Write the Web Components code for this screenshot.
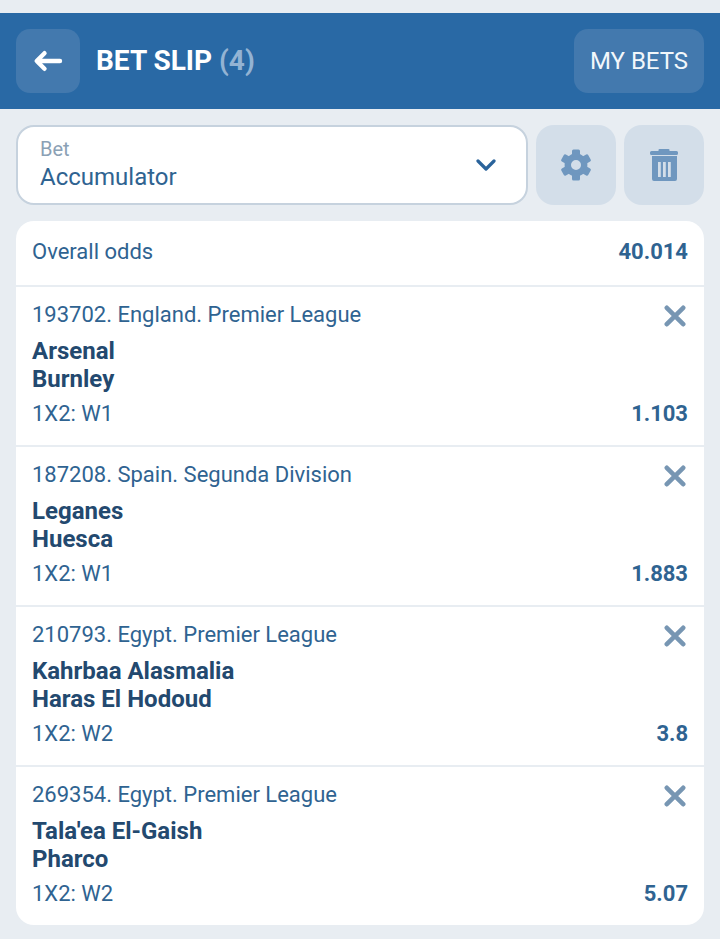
<!DOCTYPE html>
<html>
<head>
<meta charset="utf-8">
<title>Bet slip</title>
<style>
  html, body { margin: 0; padding: 0; }
  body {
    background: #e8edf2;
    font-family: Roboto, "Liberation Sans", sans-serif;
    color: #2f6391;
  }
  bet-slip { padding-top: 13px; }
</style>
</head>
<body>
<bet-slip>
  <slip-header slot="header" count="4"></slip-header>
  <slip-controls slot="controls"></slip-controls>
  <slip-card>
    <slip-total odds="40.014"></slip-total>
    <slip-event league="193702. England. Premier League" home="Arsenal" away="Burnley" market="1X2: W1" odds="1.103"></slip-event>
    <slip-event league="187208. Spain. Segunda Division" home="Leganes" away="Huesca" market="1X2: W1" odds="1.883"></slip-event>
    <slip-event league="210793. Egypt. Premier League" home="Kahrbaa Alasmalia" away="Haras El Hodoud" market="1X2: W2" odds="3.8"></slip-event>
    <slip-event league="269354. Egypt. Premier League" home="Tala'ea El-Gaish" away="Pharco" market="1X2: W2" odds="5.07" last></slip-event>
  </slip-card>
</bet-slip>

<script>
let wrapFn = text => {
  let tmpl = document.createElement('template')
  tmpl.innerHTML = text
  return document.importNode(tmpl.content, true)
}

class BetSlip extends HTMLElement {
  constructor () {
    super()
    this.attachShadow({mode: 'open'})
    this.shadowRoot.appendChild(wrapFn(`
      <style>
      :host { display: flex; flex-direction: column; width: 720px; height: 939px; box-sizing: border-box; overflow: hidden; }
      </style>
      <slot name="header"></slot>
      <slot name="controls"></slot>
      <slot></slot>`))
  }
}

class SlipHeader extends HTMLElement {
  constructor () {
    super()
    this.attachShadow({mode: 'open'})
  }

  connectedCallback () {
    this.shadowRoot.appendChild(wrapFn(`
      <style>
      :host {
        display: flex; align-items: center; height: 96px; flex: none;
        padding: 0 16px; box-sizing: border-box;
        background: #2969a5; color: #fff;
      }
      .btn {
        height: 64px; border-radius: 14px; background: #4379ae;
        display: flex; align-items: center; justify-content: center;
      }
      .back { width: 64px; }
      .bets { width: 130px; font-size: 24px; color: #f2f7fb; }
      h1 { margin: 0 0 0 16px; flex: 1; font-size: 28px; font-weight: 700; line-height: 32px; }
      h1 span { color: #93b3d3; }
      </style>
      <div class="btn back">
        <svg width="30" height="24" viewBox="0 0 30 24">
          <path d="M11.500 4.200 3.700 12 11.500 19.800M4 12H27" fill="none" stroke="#fff" stroke-width="4.4" stroke-linecap="round" stroke-linejoin="round"/>
        </svg>
      </div>
      <h1>BET SLIP <span>(${this.getAttribute('count')})</span></h1>
      <div class="btn bets">MY BETS</div>`))
  }
}

class SlipControls extends HTMLElement {
  constructor () {
    super()
    this.attachShadow({mode: 'open'})
    this.shadowRoot.appendChild(wrapFn(`
      <style>
      :host { display: flex; gap: 8px; flex: none; padding: 16px; height: 80px; }
      .select {
        flex: 1; box-sizing: border-box; border: 2px solid #c6d2de; border-radius: 18px;
        background: #fff; padding: 0 30px 0 22px;
        display: flex; align-items: center; justify-content: space-between;
      }
      .label { font-size: 20px; line-height: 24px; color: #8ba1b5; margin-top: -3px; }
      .value { font-size: 24px; line-height: 30px; color: #2f6391; margin-top: 1px; margin-bottom: -1px; }
      .square {
        width: 80px; height: 80px; border-radius: 18px; background: #d3dee9;
        display: flex; align-items: center; justify-content: center;
      }
      </style>
      <div class="select">
        <div>
          <div class="label">Bet</div>
          <div class="value">Accumulator</div>
        </div>
        <svg width="20" height="12" viewBox="0 0 20 12">
          <path d="M2 2 10 10 18 2" fill="none" stroke="#2a639b" stroke-width="3.2" stroke-linecap="round" stroke-linejoin="round"/>
        </svg>
      </div>
      <div class="square">
        <svg width="32" height="32" viewBox="-16 -16 32 32" fill="#6f97bf">
          <circle r="8.200" fill="none" stroke="#6f97bf" stroke-width="6.400"/>
          <rect x="-4" y="-15.500" width="8" height="7" rx="1.500"/>
          <rect x="-4" y="-15.500" width="8" height="7" rx="1.500" transform="rotate(60)"/>
          <rect x="-4" y="-15.500" width="8" height="7" rx="1.500" transform="rotate(120)"/>
          <rect x="-4" y="-15.500" width="8" height="7" rx="1.500" transform="rotate(180)"/>
          <rect x="-4" y="-15.500" width="8" height="7" rx="1.500" transform="rotate(240)"/>
          <rect x="-4" y="-15.500" width="8" height="7" rx="1.500" transform="rotate(300)"/>
        </svg>
      </div>
      <div class="square">
        <svg width="28" height="34" viewBox="0 0 28 34">
          <path fill="#6f97bf" fill-rule="evenodd" d="M9.500 1h9a1 1 0 0 1 1 1v1h7a1.500 1.500 0 0 1 1.500 1.500v1A1.500 1.500 0 0 1 26.500 7h-25A1.500 1.500 0 0 1 0 5.500v-1A1.500 1.500 0 0 1 1.500 3h7V2a1 1 0 0 1 1-1zM2 8h25v23a2 2 0 0 1-2 2H4a2 2 0 0 1-2-2zm6 6v15h2.800V14zm5 0v15h2.800V14zm5 0v15h2.800V14z"/>
        </svg>
      </div>`))
  }
}

class SlipCard extends HTMLElement {
  constructor () {
    super()
    this.attachShadow({mode: 'open'})
    this.shadowRoot.appendChild(wrapFn(`
      <style>
      :host { display: flex; flex-direction: column; flex: none; margin: 0 16px; background: #fff; border-radius: 18px; overflow: hidden; }
      </style>
      <slot></slot>`))
  }
}

class SlipTotal extends HTMLElement {
  constructor () {
    super()
    this.attachShadow({mode: 'open'})
  }

  connectedCallback () {
    this.shadowRoot.appendChild(wrapFn(`
      <style>
      :host {
        display: flex; justify-content: space-between; align-items: center;
        height: 66px; padding: 0 16px 4px; box-sizing: border-box;
        border-bottom: 2px solid #e8edf2; font-size: 22px; color: #2f6391;
      }
      b { font-weight: 700; }
      </style>
      <span>Overall odds</span><b>${this.getAttribute('odds')}</b>`))
  }
}

class SlipEvent extends HTMLElement {
  constructor () {
    super()
    this.attachShadow({mode: 'open'})
  }

  connectedCallback () {
    this.shadowRoot.appendChild(wrapFn(`
      <style>
      :host {
        display: block; height: 160px; padding: 14px 16px 0; box-sizing: border-box;
        border-bottom: 2px solid #e8edf2; font-size: 22px; color: #2f6391;
      }
      :host([last]) { border-bottom: 0; height: 158px; }
      .line { display: flex; justify-content: space-between; align-items: center; line-height: 28px; }
      .teams { margin-top: 8px; font-size: 24px; font-weight: 700; line-height: 28px; color: #23496f; }
      .market { margin-top: 7px; }
      b { font-weight: 700; }
      svg { margin-right: 2px; position: relative; top: 1px; }
      </style>
      <div class="line">
        <span>${this.getAttribute('league')}</span>
        <svg width="22" height="22" viewBox="0 0 22 22">
          <path d="M2.800 2.800 19.200 19.200M19.200 2.800 2.800 19.200" fill="none" stroke="#7796b3" stroke-width="4.600" stroke-linecap="round"/>
        </svg>
      </div>
      <div class="teams">${this.getAttribute('home')}<br>${this.getAttribute('away')}</div>
      <div class="line market">
        <span>${this.getAttribute('market')}</span><b>${this.getAttribute('odds')}</b>
      </div>`))
  }
}

customElements.define('bet-slip', BetSlip)
customElements.define('slip-header', SlipHeader)
customElements.define('slip-controls', SlipControls)
customElements.define('slip-card', SlipCard)
customElements.define('slip-total', SlipTotal)
customElements.define('slip-event', SlipEvent)
</script>
</body>
</html>
